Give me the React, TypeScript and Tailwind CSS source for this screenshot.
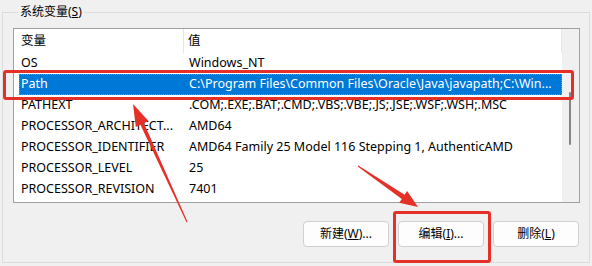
import React from "react";

const rows: [string, string][] = [
  ["OS", "Windows_NT"],
  ["Path", "C:\\Program Files\\Common Files\\Oracle\\Java\\javapath;C:\\Win..."],
  ["PATHEXT", ".COM;.EXE;.BAT;.CMD;.VBS;.VBE;.JS;.JSE;.WSF;.WSH;.MSC"],
  ["PROCESSOR_ARCHITECT...", "AMD64"],
  ["PROCESSOR_IDENTIFIER", "AMD64 Family 25 Model 116 Stepping 1, AuthenticAMD"],
  ["PROCESSOR_LEVEL", "25"],
  ["PROCESSOR_REVISION", "7401"],
];

function Btn({ children }: { children: React.ReactNode }) {
  return (
    <div className="w-[86px] h-[26px] flex items-center justify-center rounded-[4px] border border-[#d0d0d0] bg-[#fdfdfd] text-[12px] text-black">
      {children}
    </div>
  );
}

export default function App() {
  return (
    <div className="relative w-[592px] h-[266px] bg-[#f0f0f0] overflow-hidden font-['Noto_Sans','Noto_Sans_CJK_SC',sans-serif] text-black">
      <fieldset className="ml-[2px] mt-[2px] w-[588px] h-[261px] border border-[#dcdcdc] pl-[10px] pr-[9px]">
        <legend className="ml-[5px] px-[2px] h-[20px] leading-[20px] text-[12px] text-black">
          系统变量(<u>S</u>)
        </legend>
        <div className="mt-[6px] w-[567px] h-[175px] border border-[#a0a0a0] bg-white flex">
          <div className="w-[548px] flex flex-col text-[12.5px]">
            <div className="flex h-[24px] shrink-0">
              <div className="w-[170px] border-r border-[#e5e5e5] pl-[7px] flex items-center">变量</div>
              <div className="w-[378px] border-r border-[#e5e5e5] pl-[4px] flex items-center">值</div>
            </div>
            {rows.map(([k, v], i) => {
              const sel = i === 1;
              return (
                <div key={k} className="flex h-[21px] shrink-0">
                  <div
                    className={
                      "ml-[5px] w-[543px] flex items-center " +
                      (sel
                        ? "bg-[#0078d7] text-white outline outline-1 outline-dotted outline-[#5d9ad3] -outline-offset-1"
                        : "")
                    }
                  >
                    <div className="w-[165px] pl-[2px] whitespace-nowrap overflow-hidden">{k}</div>
                    <div className="w-[378px] pl-[5px] whitespace-nowrap overflow-hidden">{v}</div>
                  </div>
                </div>
              );
            })}
          </div>
          <div className="w-[17px] bg-[#f0f0f0] flex flex-col">
            <div className="mt-[63px] ml-[7px] w-[2px] h-[53px] bg-[#858585] rounded-full" />
          </div>
        </div>
        <div className="mt-[18px] mr-[1px] flex justify-end gap-[9px]">
          <Btn>
            新建(<u>W</u>)...
          </Btn>
          <Btn>
            编辑(<u>I</u>)...
          </Btn>
          <Btn>
            删除(<u>L</u>)
          </Btn>
        </div>
      </fieldset>

      {/* annotation boxes */}
      <div className="absolute left-[3px] top-[70px] w-[571px] h-[30px] border-[3px] border-[#e53027] rounded-[3px]" />
      <div className="absolute left-[393px] top-[211px] w-[98px] h-[52px] border-[3px] border-[#e53027] rounded-[3px]" />

      {/* annotation arrows */}
      <svg className="absolute left-0 top-0" width="592" height="266" viewBox="0 0 592 266">
        <polygon
          fill="#e53027"
          points="133,104 148.5,121.1 144.0,123.2 187.5,221.8 186.5,222.2 140.4,124.8 135.8,126.9"
        />
        <polygon
          fill="#e53027"
          points="418,207 399.2,202.7 401.8,199.0 357.7,166.4 358.3,165.6 404.6,194.8 407.1,191.1"
        />
      </svg>
    </div>
  );
}
